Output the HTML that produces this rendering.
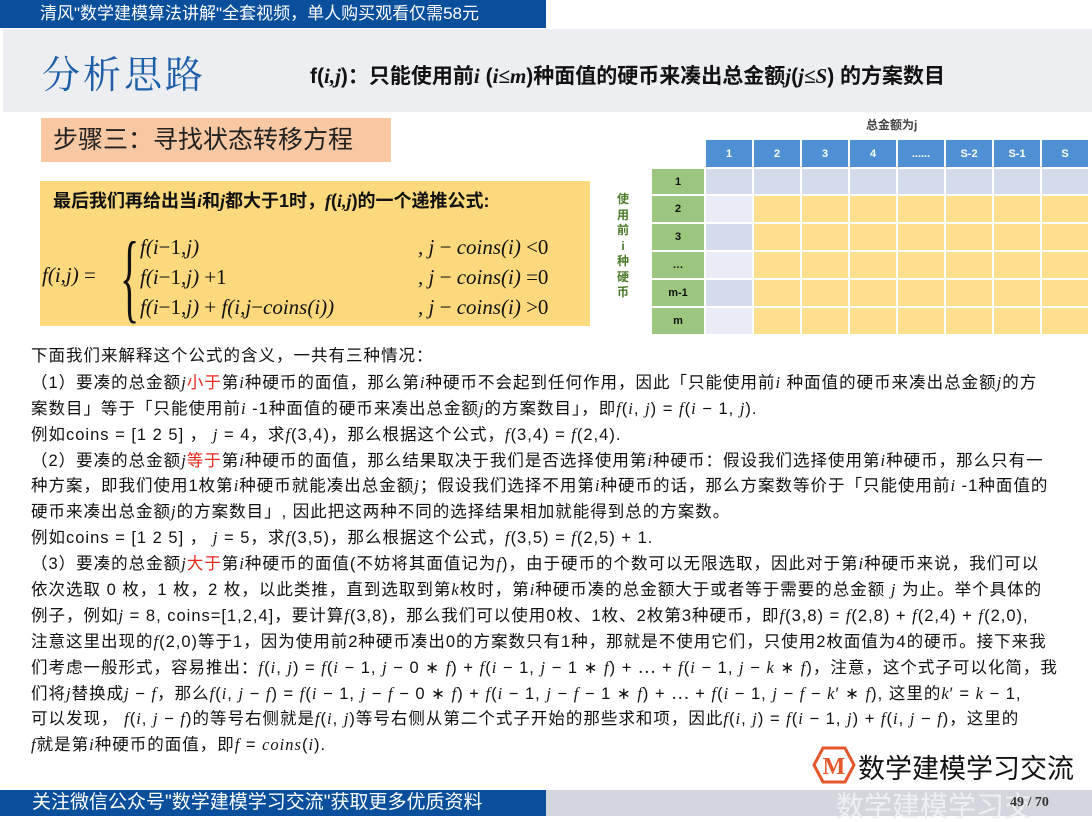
<!DOCTYPE html>
<html><head><meta charset="utf-8"><style>
*{margin:0;padding:0;box-sizing:border-box}
body{width:1092px;height:816px;overflow:hidden;background:#fff;position:relative;font-family:"Liberation Sans","Noto Sans CJK SC",sans-serif;color:#111}
.a{position:absolute;white-space:nowrap}
i{font-family:"Liberation Serif","Noto Serif CJK SC",serif}
.r{color:#e8261c}
.m{font-family:"Liberation Serif",serif;font-style:italic}
table{border-collapse:separate;border-spacing:2px}
.y{background:#fddf8e}
.t div{height:25.9px;line-height:25.9px;overflow:visible}
</style></head><body>
<div class="a" style="left:0;top:0;width:546px;height:28px;background:#0a4f9c;color:#fff;font-size:17px;line-height:28px;padding-left:40px">清风"数学建模算法讲解"全套视频，单人购买观看仅需58元</div>
<div class="a" style="left:3px;top:29px;width:1089px;height:83px;background:#eceef1"></div>
<div class="a" style="left:42px;top:44px;font-size:38px;color:#1d5ea8;font-family:'Noto Serif CJK SC',serif;letter-spacing:3px">分析思路</div>
<div class="a" style="left:310px;top:60px;font-size:21px;font-weight:bold;color:#111">f(<i>i,j</i>)：只能使用前<i>i</i> (<i>i≤m</i>)种面值的硬币来凑出总金额<i>j</i>(<i>j≤S</i>) 的方案数目</div>
<div class="a" style="left:41px;top:118px;width:350px;height:44px;background:#f8c8a3;font-size:25px;line-height:44px;padding-left:12px;color:#222">步骤三：寻找状态转移方程</div>
<div class="a" style="left:40px;top:181px;width:550px;height:145px;background:#fcd97d"></div>
<div class="a" style="left:53px;top:187px;font-size:18px;font-weight:bold">最后我们再给出当<i>i</i>和<i>j</i>都大于1时，<i>f</i>(<i>i,j</i>)的一个递推公式:</div>
<div class="a m" style="left:42px;top:263px;font-size:21px">f(i,j) <span style="font-style:normal">=</span></div>
<div class="a" style="left:120px;top:222px;font-size:100px;line-height:110px;font-family:'Liberation Serif',serif;transform:scaleX(.4);transform-origin:left">{</div>
<div class="a m" style="left:140px;top:232px;font-size:21px;line-height:30px">f(i<span style="font-style:normal">−1,</span>j)<br>f(i<span style="font-style:normal">−1,</span>j) <span style="font-style:normal">+1</span><br>f(i<span style="font-style:normal">−1,</span>j) <span style="font-style:normal">+</span> f(i,j<span style="font-style:normal">−</span>coins(i))</div>
<div class="a m" style="left:418px;top:232px;font-size:21px;line-height:30px">, j <span style="font-style:normal">−</span> coins(i) <span style="font-style:normal">&lt;0</span><br>, j <span style="font-style:normal">−</span> coins(i) <span style="font-style:normal">=0</span><br>, j <span style="font-style:normal">−</span> coins(i) <span style="font-style:normal">&gt;0</span></div>
<div class="a" style="left:866px;top:116px;font-size:12px;font-weight:bold;color:#444">总金额为j</div>
<div class="a" style="left:616px;top:192px;font-size:12px;font-weight:bold;color:#4a7a2a;width:14px;line-height:15.5px;text-align:center;white-space:normal">使用前i种硬币</div>
<div class="a" style="left:650px;top:138px">
<table style="font-size:11px;font-weight:bold;text-align:center">
<tr style="height:27px;color:#fff"><td style="width:52px;background:#fff"></td><td style="width:46px;background:#4f90d5">1</td><td style="width:46px;background:#4f90d5">2</td><td style="width:46px;background:#4f90d5">3</td><td style="width:46px;background:#4f90d5">4</td><td style="width:46px;background:#4f90d5">......</td><td style="width:46px;background:#4f90d5">S-2</td><td style="width:46px;background:#4f90d5">S-1</td><td style="width:46px;background:#4f90d5">S</td></tr>
<tr style="height:25px"><td style="background:#9cc57d">1</td><td style="background:#d4dbeb"></td><td style="background:#d4dbeb"></td><td style="background:#d4dbeb"></td><td style="background:#d4dbeb"></td><td style="background:#d4dbeb"></td><td style="background:#d4dbeb"></td><td style="background:#d4dbeb"></td><td style="background:#d4dbeb"></td></tr>
<tr style="height:26px"><td style="background:#9cc57d">2</td><td style="background:#e9ecf6"></td><td class="y"></td><td class="y"></td><td class="y"></td><td class="y"></td><td class="y"></td><td class="y"></td><td class="y"></td></tr>
<tr style="height:26px"><td style="background:#9cc57d">3</td><td style="background:#d4dbeb"></td><td class="y"></td><td class="y"></td><td class="y"></td><td class="y"></td><td class="y"></td><td class="y"></td><td class="y"></td></tr>
<tr style="height:26px"><td style="background:#9cc57d">…</td><td style="background:#e9ecf6"></td><td class="y"></td><td class="y"></td><td class="y"></td><td class="y"></td><td class="y"></td><td class="y"></td><td class="y"></td></tr>
<tr style="height:26px"><td style="background:#9cc57d">m-1</td><td style="background:#d4dbeb"></td><td class="y"></td><td class="y"></td><td class="y"></td><td class="y"></td><td class="y"></td><td class="y"></td><td class="y"></td></tr>
<tr style="height:26px"><td style="background:#9cc57d">m</td><td style="background:#e9ecf6"></td><td class="y"></td><td class="y"></td><td class="y"></td><td class="y"></td><td class="y"></td><td class="y"></td><td class="y"></td></tr>
</table></div>
<div class="a t" style="left:31px;top:344px;font-size:16.5px;letter-spacing:1px;color:#111">
<div>下面我们来解释这个公式的含义，一共有三种情况：</div>
<div>（1）要凑的总金额<i>j</i><span class="r">小于</span>第<i>i</i>种硬币的面值，那么第<i>i</i>种硬币不会起到任何作用，因此「只能使用前<i>i</i> 种面值的硬币来凑出总金额<i>j</i>的方</div>
<div>案数目」等于「只能使用前<i>i</i> -1种面值的硬币来凑出总金额<i>j</i>的方案数目」，即<i>f</i>(<i>i</i>, <i>j</i>) = <i>f</i>(<i>i</i> − 1, <i>j</i>).</div>
<div>例如coins = [1 2 5] ，  <i>j</i> = 4，求<i>f</i>(3,4)，那么根据这个公式，<i>f</i>(3,4) = <i>f</i>(2,4).</div>
<div>（2）要凑的总金额<i>j</i><span class="r">等于</span>第<i>i</i>种硬币的面值，那么结果取决于我们是否选择使用第<i>i</i>种硬币：假设我们选择使用第<i>i</i>种硬币，那么只有一</div>
<div>种方案，即我们使用1枚第<i>i</i>种硬币就能凑出总金额<i>j</i>；假设我们选择不用第<i>i</i>种硬币的话，那么方案数等价于「只能使用前<i>i</i> -1种面值的</div>
<div>硬币来凑出总金额<i>j</i>的方案数目」, 因此把这两种不同的选择结果相加就能得到总的方案数。</div>
<div>例如coins = [1 2 5] ，  <i>j</i> = 5，求<i>f</i>(3,5)，那么根据这个公式，<i>f</i>(3,5) = <i>f</i>(2,5) + 1.</div>
<div>（3）要凑的总金额<i>j</i><span class="r">大于</span>第<i>i</i>种硬币的面值(不妨将其面值记为<i>f</i>)，由于硬币的个数可以无限选取，因此对于第<i>i</i>种硬币来说，我们可以</div>
<div>依次选取 0 枚，1 枚，2 枚，以此类推，直到选取到第<i>k</i>枚时，第<i>i</i>种硬币凑的总金额大于或者等于需要的总金额 <i>j</i> 为止。举个具体的</div>
<div>例子，例如<i>j</i> = 8,  coins=[1,2,4]，要计算<i>f</i>(3,8)，那么我们可以使用0枚、1枚、2枚第3种硬币，即<i>f</i>(3,8) = <i>f</i>(2,8) + <i>f</i>(2,4) + <i>f</i>(2,0),</div>
<div>注意这里出现的<i>f</i>(2,0)等于1，因为使用前2种硬币凑出0的方案数只有1种，那就是不使用它们，只使用2枚面值为4的硬币。接下来我</div>
<div>们考虑一般形式，容易推出：<i>f</i>(<i>i</i>, <i>j</i>) = <i>f</i>(<i>i</i> − 1, <i>j</i> − 0 ∗ <i>f</i>) + <i>f</i>(<i>i</i> − 1, <i>j</i> − 1 ∗ <i>f</i>) + ⋯ + <i>f</i>(<i>i</i> − 1, <i>j</i> − <i>k</i> ∗ <i>f</i>)，注意，这个式子可以化简，我</div>
<div>们将<i>j</i>替换成<i>j</i> − <i>f</i>，那么<i>f</i>(<i>i</i>, <i>j</i> − <i>f</i>) = <i>f</i>(<i>i</i> − 1, <i>j</i> − <i>f</i> − 0 ∗ <i>f</i>) + <i>f</i>(<i>i</i> − 1, <i>j</i> − <i>f</i> − 1 ∗ <i>f</i>) + ⋯ + <i>f</i>(<i>i</i> − 1, <i>j</i> − <i>f</i> − <i>k</i>′ ∗ <i>f</i>), 这里的<i>k</i>′ = <i>k</i> − 1,</div>
<div>可以发现， <i>f</i>(<i>i</i>, <i>j</i> − <i>f</i>)的等号右侧就是<i>f</i>(<i>i</i>, <i>j</i>)等号右侧从第二个式子开始的那些求和项，因此<i>f</i>(<i>i</i>, <i>j</i>) = <i>f</i>(<i>i</i> − 1, <i>j</i>) + <i>f</i>(<i>i</i>, <i>j</i> − <i>f</i>)，这里的</div>
<div><i>f</i>就是第<i>i</i>种硬币的面值，即<i>f</i> = <i>coins</i>(<i>i</i>).</div>
</div>
<svg class="a" style="left:812px;top:746px" width="44" height="38" viewBox="0 0 44 38"><polygon points="11,2 33,2 42,19 33,36 11,36 2,19" fill="#fff" stroke="#e5562a" stroke-width="3"/><text x="22" y="28" text-anchor="middle" font-family="Liberation Serif" font-weight="bold" font-size="24" fill="#e5562a">M</text></svg>
<div class="a" style="left:858px;top:747px;font-size:27px;color:#111">数学建模学习交流</div>
<div class="a" style="left:0;top:790px;width:1092px;height:26px;background:#d3d7dd"></div>
<div class="a" style="left:0;top:790px;width:546px;height:26px;background:#0a4f9c;color:#fff;font-size:19px;line-height:26px;padding-left:32px">关注微信公众号"数学建模学习交流"获取更多优质资料</div>
<div class="a" style="left:836px;top:792px;font-size:28px;color:#eef0f3;line-height:30px">数学建模学习交</div>
<div class="a" style="left:1010px;top:795px;font-size:14px;font-weight:bold;color:#333;font-family:'Liberation Serif',serif">49 / 70</div>
</body></html>
